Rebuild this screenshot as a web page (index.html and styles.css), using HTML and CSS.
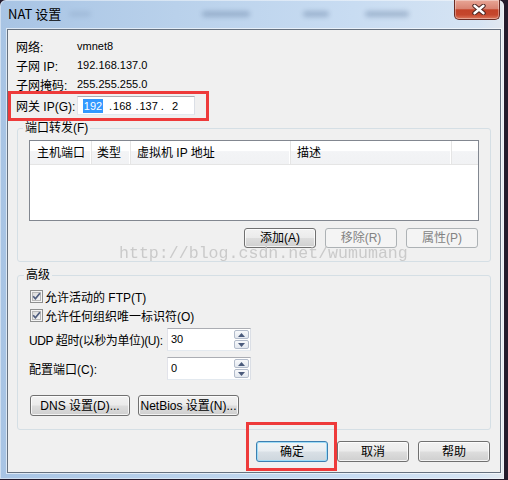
FILE: index.html
```html
<!DOCTYPE html>
<html>
<head>
<meta charset="utf-8">
<title>NAT 设置</title>
<link rel="stylesheet" href="styles.css">
</head>
<body>
<div class="window">
  <div class="titlebar">
    <span class="title">NAT 设置</span>
    <span class="ghost g1"></span>
    <span class="ghost g2"></span>
    <span class="ghost g3"></span>
    <span class="ghost g4"></span>
    <div class="close">
      <svg width="14" height="11" viewBox="0 0 14 11">
        <path d="M2.5 1.8 L11.5 9.2 M11.5 1.8 L2.5 9.2" stroke="#4a2420" stroke-width="4.4" stroke-linecap="round" fill="none"/>
        <path d="M2.5 1.8 L11.5 9.2 M11.5 1.8 L2.5 9.2" stroke="#ffffff" stroke-width="2.4" stroke-linecap="round" fill="none"/>
      </svg>
    </div>
  </div>
  <div class="client">
    <div class="info">
      <div class="row"><span class="lbl">网络:</span><span class="val">vmnet8</span></div>
      <div class="row"><span class="lbl">子网 IP:</span><span class="val">192.168.137.0</span></div>
      <div class="row"><span class="lbl">子网掩码:</span><span class="val">255.255.255.0</span></div>
      <div class="row gw"><span class="lbl">网关 IP(G):</span>
        <div class="ipbox">
          <span class="oct sel">192</span><span class="dot d1">.</span><span class="oct o2">168</span><span class="dot d2">.</span><span class="oct o3">137</span><span class="dot d3">.</span><span class="oct o4">2</span>
        </div>
      </div>
    </div>

    <fieldset class="group pf">
      <legend>端口转发(F)</legend>
      <div class="lv">
        <div class="lvh">
          <span class="col c1">主机端口</span>
          <span class="col c2">类型</span>
          <span class="col c3">虚拟机 IP 地址</span>
          <span class="col c4">描述</span>
          <span class="col c5"></span>
        </div>
      </div>
      <div class="btnrow">
        <div class="btn">添加(A)</div>
        <div class="btn disabled">移除(R)</div>
        <div class="btn disabled">属性(P)</div>
      </div>
    </fieldset>

    <fieldset class="group adv">
      <legend>高级</legend>
      <div class="cb">
        <svg class="chk" width="13" height="13" viewBox="0 0 13 13">
          <defs><linearGradient id="cbg" x1="0" y1="0" x2="1" y2="1"><stop offset="0" stop-color="#d9d9d9"/><stop offset="1" stop-color="#f6f6f6"/></linearGradient></defs>
          <rect x="0.5" y="0.5" width="12" height="12" fill="#f4f4f4" stroke="#8e8f8f"/>
          <rect x="2.5" y="2.5" width="8" height="8" fill="url(#cbg)" stroke="#b8b8b8"/>
          <path d="M3.2 6.3 L5.4 8.8 L9.9 3.2" fill="none" stroke="#4f5d7e" stroke-width="1.7"/>
        </svg>
        <span>允许活动的 FTP(T)</span>
      </div>
      <div class="cb">
        <svg class="chk" width="13" height="13" viewBox="0 0 13 13">
          <rect x="0.5" y="0.5" width="12" height="12" fill="#f4f4f4" stroke="#8e8f8f"/>
          <rect x="2.5" y="2.5" width="8" height="8" fill="url(#cbg)" stroke="#b8b8b8"/>
          <path d="M3.2 6.3 L5.4 8.8 L9.9 3.2" fill="none" stroke="#4f5d7e" stroke-width="1.7"/>
        </svg>
        <span>允许任何组织唯一标识符(O)</span>
      </div>
      <div class="field udp">
        <span class="flbl tight">UDP 超时(以秒为单位)(U):</span>
        <div class="spin">
          <span class="v">30</span>
          <div class="arrows">
            <div class="arr"><svg width="7" height="4" viewBox="0 0 7 4"><path d="M0 4 L3.5 0 L7 4 Z" fill="#4b5b7c"/></svg></div>
            <div class="arr"><svg width="7" height="4" viewBox="0 0 7 4"><path d="M0 0 L3.5 4 L7 0 Z" fill="#4b5b7c"/></svg></div>
          </div>
        </div>
      </div>
      <div class="field port">
        <span class="flbl">配置端口(C):</span>
        <div class="spin">
          <span class="v">0</span>
          <div class="arrows">
            <div class="arr"><svg width="7" height="4" viewBox="0 0 7 4"><path d="M0 4 L3.5 0 L7 4 Z" fill="#4b5b7c"/></svg></div>
            <div class="arr"><svg width="7" height="4" viewBox="0 0 7 4"><path d="M0 0 L3.5 4 L7 0 Z" fill="#4b5b7c"/></svg></div>
          </div>
        </div>
      </div>
      <div class="dnsrow">
        <div class="btn dns">DNS 设置(D)...</div>
        <div class="btn nb">NetBios 设置(N)...</div>
      </div>
    </fieldset>

    <div class="footer">
      <div class="btn default">确定</div>
      <div class="btn">取消</div>
      <div class="btn">帮助</div>
    </div>

    <div class="watermark">http://blog.csdn.net/wumumang</div>
    <div class="mark m1"></div>
    <div class="mark m2"></div>
  </div>
</div>
</body>
</html>
```
FILE: styles.css
```css
* { box-sizing: border-box; }
html, body { margin: 0; padding: 0; }
body {
  width: 508px;
  height: 480px;
  overflow: hidden;
  background: #241b2c;
  font-family: "Liberation Sans", "Noto Sans CJK SC", sans-serif;
  font-size: 12px;
  color: #000;
}
.window {
  width: 504px;
  height: 479px;
  padding: 0 3px 0 7px;
  border-radius: 6px 6px 0 0;
  background: linear-gradient(to right, #a8c4e4 0%, #b9d1eb 35%, #c8dcf2 70%, #d6e4f3 95%, #e2e8ef 100%);
  box-shadow: inset 0 0 0 1px rgba(255,255,255,0.45);
  display: flex;
  flex-direction: column;
}
.titlebar {
  position: relative;
  height: 29px;
  display: flex;
  justify-content: space-between;
  align-items: flex-start;
  flex: none;
}
.title {
  margin-top: 5px;
  padding-left: 1px;
  font-family: "Noto Sans CJK SC", sans-serif;
  font-size: 13px;
  line-height: 18px;
  color: #000;
  position: relative;
  z-index: 1;
}
.ghost {
  position: absolute;
  top: 11px;
  height: 6px;
  border-radius: 3px;
  background: #6a84a6;
  filter: blur(2.5px);
  opacity: 0.45;
}
.g1 { left: 62px; width: 22px; opacity: 0.2; }
.g2 { left: 195px; width: 48px; }
.g3 { left: 296px; width: 26px; }
.g4 { left: 358px; width: 44px; }
.close {
  width: 46px;
  height: 20px;
  margin-right: 1px;
  border: 1px solid #6b2c24;
  border-top: 0;
  border-radius: 0 0 5px 5px;
  background: linear-gradient(#e8a696 0%, #d98473 45%, #c34329 52%, #c5472d 78%, #dc785d 100%);
  box-shadow: inset 0 0 0 1px rgba(255,255,255,0.35);
  display: flex;
  align-items: center;
  justify-content: center;
  padding-left: 3px;
  position: relative;
  z-index: 1;
}
.client {
  flex: none;
  width: 494px;
  height: 444px;
  border: 1px solid #66717f;
  background: #f0f0f0;
  position: relative;
  box-shadow: 0 0 0 1px rgba(255,255,255,0.6);
}
.info { padding: 7px 0 0 8px; }
.row {
  display: flex;
  align-items: center;
  height: 18px;
  margin-bottom: 1px;
  white-space: nowrap;
}
.lbl { width: 61px; flex: none; }
.val { font-size: 11px; }
.row.gw { height: 19px; margin-top: 3px; margin-bottom: 0; }
.ipbox {
  width: 118px;
  height: 19px;
  border: 1px solid;
  border-color: #abadb3 #dbdfe6 #e3e9ef #e2e3ea;
  background: #fff;
  display: flex;
  align-items: center;
  padding-left: 5px;
  line-height: 14px;
  font-size: 11px;
}
.oct { display: inline-block; }
.sel {
  width: 20px;
  height: 14px;
  text-align: center;
  background: #3399ff;
  color: #fff;
}
.d1 { margin-left: 6px; }
.o2 { margin-left: 1px; }
.d2 { margin-left: 4px; }
.o3 { margin-left: 1px; }
.d3 { margin-left: 3px; }
.o4 { margin-left: 8px; }

fieldset.group {
  margin: 5px 0 0 9px;
  width: 474px;
  min-width: 0;
  border: 1px solid #d5dfe5;
  border-radius: 3px;
  padding: 4px 11px 13px 11px;
}
legend {
  padding: 0 2px;
  margin-left: -6px;
  line-height: 16px;
}
.lv {
  height: 81px;
  border: 1px solid #828790;
  background: #fff;
}
.lvh {
  display: flex;
  height: 24px;
  border-bottom: 1px solid #e5e5e5;
  background: linear-gradient(#ffffff 0%, #ffffff 42%, #f3f4f6 46%, #f1f2f4 100%);
}
.col {
  height: 23px;
  border-right: 1px solid #e5e5e5;
  box-shadow: inset -1px 0 0 #fff;
  padding: 4px 0 0 6px;
  line-height: 16px;
  white-space: nowrap;
  flex: none;
}
.c1 { width: 62px; padding-left: 7px; }
.c2 { width: 39px; padding-left: 5px; }
.c3 { width: 160px; }
.c4 { width: 161px; }
.c5 { flex: 1; border-right: 0; box-shadow: none; }

.btn {
  height: 20px;
  width: 72px;
  border: 1px solid #707070;
  border-radius: 3px;
  background: linear-gradient(#f2f2f2 0%, #ebebeb 48%, #dddddd 52%, #cfcfcf 100%);
  box-shadow: inset 0 0 0 1px rgba(255,255,255,0.75);
  display: flex;
  align-items: center;
  justify-content: center;
  white-space: nowrap;
  line-height: 16px;
  flex: none;
}
.btn.disabled {
  border-color: #adb2b5;
  background: #f4f4f4;
  box-shadow: none;
  color: #838383;
}
.btnrow {
  display: flex;
  justify-content: flex-end;
  gap: 9px;
  margin-top: 7px;
  padding-right: 1px;
}

fieldset.adv { padding: 4px 11px 13px 12px; }
.cb {
  display: flex;
  align-items: center;
  height: 19px;
  gap: 2px;
  white-space: nowrap;
}
.chk { flex: none; }
.field {
  display: flex;
  align-items: center;
  height: 23px;
  margin-left: -1px;
  white-space: nowrap;
}
.flbl { width: 138px; flex: none; }
.flbl.tight { letter-spacing: -0.4px; }
.udp { margin-top: 3px; }
.port { margin-top: 6px; }
.spin {
  display: flex;
  width: 84px;
  height: 23px;
  border: 1px solid;
  border-color: #abadb3 #dbdfe6 #e3e9ef #e2e3ea;
  background: #fff;
  padding: 1px 1px 1px 0;
}
.spin .v { flex: 1; padding-left: 3px; line-height: 19px; font-size: 11px; }
.arrows {
  width: 15px;
  display: flex;
  flex-direction: column;
  gap: 1px;
}
.arr {
  flex: 1;
  border: 1px solid #b3bccb;
  border-radius: 2px;
  background: linear-gradient(#f8f9fb, #e3e8ef);
  display: flex;
  align-items: center;
  justify-content: center;
}
.dnsrow {
  display: flex;
  gap: 8px;
  margin-top: 15px;
}
.btn.dns { width: 100px; height: 21px; }
.btn.nb { width: 101px; height: 21px; }

.footer {
  display: flex;
  justify-content: flex-end;
  gap: 9px;
  margin-top: 11px;
  padding-right: 10px;
}
.footer .btn { height: 21px; }
.btn.default {
  border-color: #3c7fb1;
  box-shadow: inset 0 0 0 1px #9fdcf7;
  background: linear-gradient(#f1f4f6 0%, #e8edf1 48%, #d9e0e6 52%, #cdd6dd 100%);
}

.watermark {
  position: absolute;
  left: 111px;
  top: 214px;
  font-family: "Liberation Mono", monospace;
  font-size: 16.6px;
  line-height: 19px;
  color: #c4c4c4;
  white-space: nowrap;
  opacity: 0.85;
  pointer-events: none;
}
.mark {
  position: absolute;
  border: 3px solid #ee3a3a;
}
.m1 { left: 0; top: 61px; width: 201px; height: 30px; }
.m2 { left: 238px; top: 392px; width: 91px; height: 49px; }
```
